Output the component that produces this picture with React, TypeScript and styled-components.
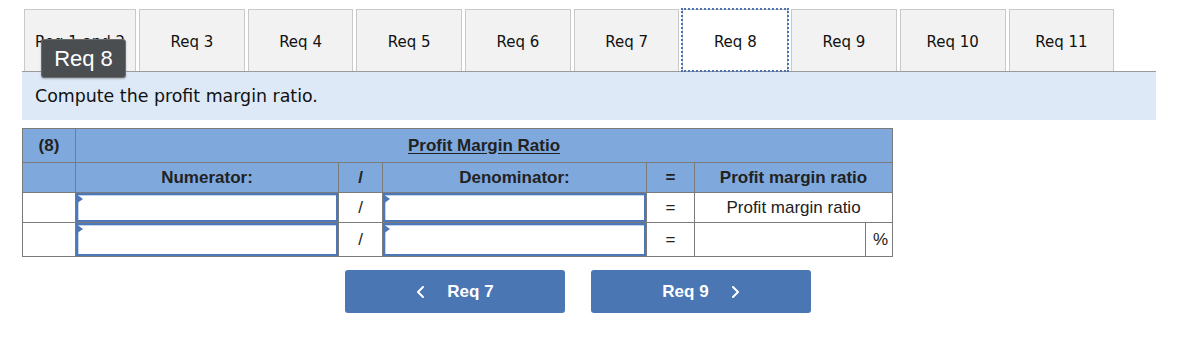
import React from "react";
import styled, { createGlobalStyle } from "styled-components";

const Global = createGlobalStyle`
  html, body { margin: 0; padding: 0; background: #fff; }
  body { font-family: "DejaVu Sans", Verdana, sans-serif; }
`;

const Page = styled.div`
  position: relative;
  width: 1134px;
  margin: 9px 0 0 22px;
`;

const TabStrip = styled.div`
  display: flex;
  gap: 3px;
  padding-left: 2px;
  border-bottom: 1px solid #9a9a9a;
`;

const Tab = styled.div<{ $active?: boolean; $wide?: boolean }>`
  box-sizing: border-box;
  width: ${(p) => (p.$wide ? "112px" : "105.7px")};
  height: 62px;
  display: flex;
  align-items: center;
  justify-content: center;
  padding-top: 2px;
  font-family: "DejaVu Sans", Verdana, sans-serif;
  font-size: 15px;
  color: #111;
  white-space: nowrap;
  background: ${(p) => (p.$active ? "#ffffff" : "#f2f2f2")};
  border: 1px solid #c9c9c9;
  border-bottom: none;
  outline: ${(p) => (p.$active ? "2px dotted #4a72b4" : "none")};
  outline-offset: -1px;
`;

const Tooltip = styled.div`
  position: absolute;
  left: 19px;
  top: 30px;
  width: 85px;
  height: 39px;
  box-sizing: border-box;
  display: flex;
  align-items: center;
  justify-content: center;
  background: #4b4e51;
  border: 1px solid #6b6e71;
  border-radius: 3px;
  color: #fff;
  font-family: "Liberation Sans", Arial, sans-serif;
  font-size: 22px;
  box-shadow: 0 1px 2px rgba(0, 0, 0, 0.25);
`;

const Instruction = styled.div`
  height: 48px;
  display: flex;
  align-items: center;
  padding-left: 13px;
  background: #dde9f6;
  font-family: "DejaVu Sans", Verdana, sans-serif;
  font-size: 17.4px;
  color: #111;
`;

const Table = styled.table`
  margin-top: 8px;
  width: 871px;
  border-collapse: collapse;
  table-layout: fixed;
  font-family: "Liberation Sans", Arial, sans-serif;
  font-size: 17px;
  color: #222;
`;

const Cell = styled.td<{ $head?: boolean; $h: number; $right?: boolean }>`
  border: 1px solid #7b7b7b;
  padding: 0;
  height: ${(p) => p.$h}px;
  text-align: ${(p) => (p.$right ? "right" : "center")};
  padding-right: ${(p) => (p.$right ? "4px" : "0")};
  vertical-align: middle;
  background: ${(p) => (p.$head ? "#7fa9dd" : "#fff")};
  font-weight: ${(p) => (p.$head ? 700 : 400)};
`;

const Title = styled.span`
  text-decoration: underline;
  text-underline-offset: 2px;
`;

const InputWrap = styled.div`
  position: relative;
  width: 100%;
  height: 100%;
`;

const Input = styled.input`
  display: block;
  box-sizing: border-box;
  width: 100%;
  height: 100%;
  margin: 0;
  border: 2px solid #4d78b7;
  box-shadow: inset 1px 1px 0 #c3d3ea;
  background: #fff;
  outline: none;
  font: inherit;
`;

const Marker = styled.span`
  position: absolute;
  left: 0;
  top: 1px;
  width: 0;
  height: 0;
  border-top: 5px solid transparent;
  border-bottom: 5px solid transparent;
  border-left: 7px solid #4d78b7;
`;

const NavRow = styled.div`
  display: flex;
  gap: 26px;
  padding-left: 323px;
  margin-top: 13px;
`;

const NavButton = styled.button`
  width: 220px;
  height: 43px;
  display: flex;
  align-items: center;
  justify-content: center;
  gap: 21px;
  background: #4a76b4;
  border: none;
  border-radius: 3px;
  color: #fff;
  font-family: "Liberation Sans", Arial, sans-serif;
  font-weight: 700;
  font-size: 17px;
  padding: 0;
  cursor: pointer;
`;

const Chevron = ({ dir }: { dir: "left" | "right" }) => (
  <svg width="10" height="12" viewBox="0 0 10 12" fill="none">
    <polyline
      points={dir === "left" ? "7,1 2,6 7,11" : "3,1 8,6 3,11"}
      stroke="#fff"
      strokeWidth="2"
      strokeLinecap="round"
      strokeLinejoin="round"
    />
  </svg>
);

const Entry = () => (
  <InputWrap>
    <Input />
    <Marker />
  </InputWrap>
);

const tabs = ["Req 1 and 2", "Req 3", "Req 4", "Req 5", "Req 6", "Req 7", "Req 8", "Req 9", "Req 10", "Req 11"];

export default function App() {
  return (
    <>
      <Global />
      <Page>
        <TabStrip>
          {tabs.map((t, i) => (
            <Tab key={t} $wide={i === 0} $active={t === "Req 8"}>
              {t}
            </Tab>
          ))}
        </TabStrip>
        <Tooltip>Req 8</Tooltip>
        <Instruction>Compute the profit margin ratio.</Instruction>
        <Table>
          <colgroup>
            <col style={{ width: 53 }} />
            <col style={{ width: 263 }} />
            <col style={{ width: 44 }} />
            <col style={{ width: 264 }} />
            <col style={{ width: 48 }} />
            <col style={{ width: 171 }} />
            <col style={{ width: 27 }} />
          </colgroup>
          <tbody>
            <tr>
              <Cell $head $h={33}>(8)</Cell>
              <Cell $head $h={33} colSpan={6}>
                <Title>Profit Margin Ratio</Title>
              </Cell>
            </tr>
            <tr>
              <Cell $head $h={29}></Cell>
              <Cell $head $h={29}>Numerator:</Cell>
              <Cell $head $h={29}>/</Cell>
              <Cell $head $h={29}>Denominator:</Cell>
              <Cell $head $h={29}>=</Cell>
              <Cell $head $h={29} colSpan={2}>Profit margin ratio</Cell>
            </tr>
            <tr>
              <Cell $h={29}></Cell>
              <Cell $h={29}><Entry /></Cell>
              <Cell $h={29}>/</Cell>
              <Cell $h={29}><Entry /></Cell>
              <Cell $h={29}>=</Cell>
              <Cell $h={29} colSpan={2}>Profit margin ratio</Cell>
            </tr>
            <tr>
              <Cell $h={33}></Cell>
              <Cell $h={33}><Entry /></Cell>
              <Cell $h={33}>/</Cell>
              <Cell $h={33}><Entry /></Cell>
              <Cell $h={33}>=</Cell>
              <Cell $h={33}></Cell>
              <Cell $h={33} $right>%</Cell>
            </tr>
          </tbody>
        </Table>
        <NavRow>
          <NavButton>
            <Chevron dir="left" />
            <span>Req 7</span>
          </NavButton>
          <NavButton>
            <span>Req 9</span>
            <Chevron dir="right" />
          </NavButton>
        </NavRow>
      </Page>
    </>
  );
}
